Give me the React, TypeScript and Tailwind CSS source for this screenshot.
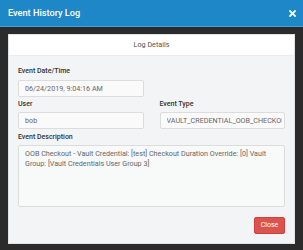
import React from "react";

const inputCls =
  "mt-[2px] h-[17px] w-full bg-[#fafafa] border border-[#dcdcdc] rounded-[2px] pl-[6px] pr-[2px] text-[7.2px] text-[#666] outline-none";

export default function App() {
  return (
    <div
      className="w-[303px] h-[250px] bg-[#2b2b2b] flex flex-col overflow-hidden"
      style={{ fontFamily: "Roboto, 'Liberation Sans', sans-serif" }}
    >
      <div className="h-[27px] bg-[#1e87c8] border-b border-[#46a0dc] flex items-center justify-between px-[8px] shrink-0">
        <span className="text-white text-[9.2px] font-medium leading-none">Event History Log</span>
        <svg width="7" height="7" viewBox="0 0 10 10" className="mr-[-1px]">
          <path d="M1.5 1.5 L8.5 8.5 M8.5 1.5 L1.5 8.5" stroke="white" strokeWidth="2.6" strokeLinecap="square" />
        </svg>
      </div>
      <div className="mx-[8px] mt-[7px] h-[210px] bg-[#f3f4f5] border border-[#e2e2e2] flex flex-col">
        <div className="h-[21px] bg-white border-b border-[#ececec] flex items-center justify-center shrink-0">
          <span className="text-[7.2px] text-[#555]">Log Details</span>
        </div>
        <div className="px-[9px] pt-[9px] flex flex-col">
          <div className="grid grid-cols-2 gap-x-[16px]">
            <div className="flex flex-col">
              <label className="text-[7px] font-medium text-[#333] leading-[12px] h-[12px]">Event Date/Time</label>
              <input readOnly value="06/24/2019, 9:04:16 AM" className={inputCls + " !mt-[3px]"} />
            </div>
            <div />
            <div className="flex flex-col mt-[1px]">
              <label className="text-[7px] font-medium text-[#333] leading-[12px] h-[12px]">User</label>
              <input readOnly value="bob" className={inputCls} />
            </div>
            <div className="flex flex-col mt-[1px]">
              <label className="text-[7px] font-medium text-[#333] leading-[12px] h-[12px]">Event Type</label>
              <input readOnly value="VAULT_CREDENTIAL_OOB_CHECKOUT" className={inputCls} />
            </div>
          </div>
          <label className="mt-[2px] text-[7px] font-medium text-[#333] leading-[12px] h-[12px]">Event Description</label>
          <textarea
            readOnly
            value="OOB Checkout - Vault Credential: [test] Checkout Duration Override: [0] Vault Group: [Vault Credentials User Group 3]"
            className="mt-[2px] h-[62px] w-full resize-none bg-[#f8f9f9] border border-[#dcdcdc] rounded-[2px] px-[6px] pt-[3px] text-[7.2px] leading-[10px] text-[#666] outline-none"
          />
          <div className="flex justify-end mt-[10px]">
            <button className="w-[31px] h-[17px] bg-[#d9534f] border border-[#d43f3a] rounded-[2px] text-white text-[7px] flex items-center justify-center">
              Close
            </button>
          </div>
        </div>
      </div>
    </div>
  );
}
